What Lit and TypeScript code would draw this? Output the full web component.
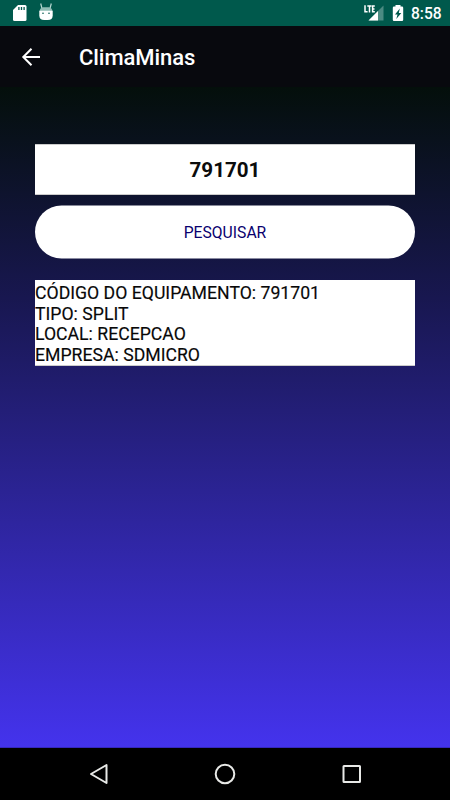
import { LitElement, html, css } from "lit";
import { customElement, state } from "lit/decorators.js";

@customElement("status-bar")
class StatusBar extends LitElement {
  static styles = css`
    :host { display: flex; justify-content: space-between; height: 26px; background: #00594c; color: #fff; }
    svg { display: block; }
    .right { display: flex; }
    .time { width: 39px; font: 500 15.6px/28px Roboto, sans-serif; white-space: nowrap; }
  `;
  render() {
    return html`
      <svg width="60" height="26" viewBox="0 0 60 26">
        <path fill="#fff" d="M18 5h7q1.500 0 1.500 1.500v13q0 1.500-1.500 1.500H14.500q-1.500 0-1.500-1.500V10z" />
        <path stroke="#00594c" stroke-width="1.300" d="M18.900 7v3M21.500 7v3M24.100 7v3" />
        <path stroke="#b8d8d2" stroke-width="1.200" d="m40.700 3.500 1.300 5M51.300 3.500l-1.300 5" />
        <path fill="#8fbcb4" d="M39.500 11.500Q40 7.500 43 7.200h6q3 .3 3.500 4.300z" />
        <path fill="#fff" d="M39.300 10.800h13.400v4.700q0 4.500-5 4.500h-3.400q-5 0-5-4.500z" />
        <circle cx="43" cy="13.200" r=".8" fill="#00594c" />
        <circle cx="49" cy="13.200" r=".8" fill="#00594c" />
      </svg>
      <div class="right">
        <svg width="48" height="26" viewBox="363 0 48 26">
          <path fill="#4c8b82" d="M383.500 5.500V20.500H368.500z" />
          <path fill="#fff" d="M378 11V20.500H368.500z" />
          <path fill="#00594c" d="M363 4h12.500v9H363z" />
          <path fill="none" stroke="#fff" stroke-width="1.500" d="M365 5.300v6.500h2.600M367.300 6h4.200M369.500 6v6.500M374.800 6H372.600v5.800h2.200M372.600 8.900h1.900" />
          <path fill="#fff" d="M395.500 5h5v1.600h1.500q1.200 0 1.200 1.200v12q0 1.200-1.200 1.200h-8q-1.200 0-1.200-1.200v-12q0-1.200 1.200-1.200h1.500z" />
          <path fill="#00594c" d="M399.800 8.500 395 14.500h2.500L396.300 19l5-6h-2.500z" />
        </svg>
        <span class="time">8:58</span>
      </div>
    `;
  }
}

@customElement("nav-bar")
class NavBar extends LitElement {
  static styles = css`
    :host { display: block; height: 52px; background: #000; }
    svg { display: block; }
  `;
  render() {
    return html`
      <svg width="450" height="52" viewBox="0 748 450 52" fill="none" stroke="#e8e9e7" stroke-width="2" stroke-linejoin="round">
        <path d="M106.500 765v18L91 774z" />
        <circle cx="225" cy="774" r="9.300" />
        <rect x="343.500" y="766" width="16.500" height="16" rx=".5" />
      </svg>
    `;
  }
}

@customElement("app-root")
class AppRoot extends LitElement {
  static styles = css`
    :host { display: flex; flex-direction: column; width: 450px; height: 800px; overflow: hidden; font-family: Roboto, sans-serif; }
    .toolbar { display: flex; align-items: center; height: 61px; box-sizing: border-box; padding-left: 21px; background: #08090e; color: #fff; }
    .toolbar svg { display: block; flex: none; margin-right: 38px; }
    .title { font-size: 22px; font-weight: 500; line-height: 30px; padding-top: 2px; letter-spacing: -0.060px; }
    .content { flex: 1; box-sizing: border-box; padding: 57px 35px 0; background: linear-gradient(#040f0b, #181750 32%, #4433ed); border-bottom: 1px solid #3528bd; }
    .code, .search { display: flex; align-items: center; justify-content: center; box-sizing: border-box; background: #fff; width: 380px; }
    .code { height: 51px; font-size: 20.600px; font-weight: 700; color: #0b0c0c; border: solid #ccc; border-width: 1px 0; }
    .search { height: 53px; margin-top: 10.500px; border: 0; border-radius: 27px; font: 400 15.700px Roboto, sans-serif; color: #09006e; padding: 0; transform: translateY(-0.500px); }
    .result { margin-top: 21.500px; height: 86px; box-sizing: border-box; padding-top: 3px; background: #fff; color: #080808; font-size: 17.670px; line-height: 20.600px; white-space: nowrap; border-bottom: 1px solid #ccc; -webkit-text-stroke: 0.150px #080808; }
  `;

  @state() private code = "791701";
  private rows = [
    "CÓDIGO DO EQUIPAMENTO: 791701",
    "TIPO: SPLIT",
    "LOCAL: RECEPCAO",
    "EMPRESA: SDMICRO",
  ];

  render() {
    return html`
      <status-bar></status-bar>
      <header class="toolbar">
        <svg width="20" height="20" viewBox="0 0 20 20" fill="none" stroke="#fff" stroke-width="2">
          <path d="M19 10H2.500M10.500 1.700 2.300 10l8.200 8.300" />
        </svg>
        <span class="title">ClimaMinas</span>
      </header>
      <main class="content">
        <div class="code">${this.code}</div>
        <button class="search">PESQUISAR</button>
        <div class="result">${this.rows.map((r) => html`<div>${r}</div>`)}</div>
      </main>
      <nav-bar></nav-bar>
    `;
  }
}
